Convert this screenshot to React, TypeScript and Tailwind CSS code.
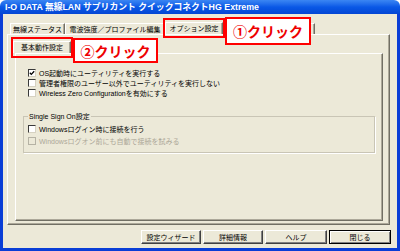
import React from 'react'

// XP-style dialog: オプション設定 tab of the I-O DATA supplicant, with red callouts

const Check = ({ checked, disabled }: { checked?: boolean; disabled?: boolean }) => (
  <span
    className={
      disabled
        ? 'w-[8px] h-[8px] shrink-0 border border-[#b5b2a4] bg-[#ece9d8]'
        : 'w-[8px] h-[8px] shrink-0 border border-[#3a3a3a] border-r-[#d6d2c2] border-b-[#d6d2c2] bg-white flex items-center justify-center'
    }
  >
    {checked && (
      <svg width="6" height="6" viewBox="0 0 6 6">
        <polyline points="0.8,2.8 2.3,4.4 5.2,1.2" fill="none" stroke="#000" strokeWidth="1.3" />
      </svg>
    )}
  </span>
)

const Row = ({ label, checked, disabled }: { label: string; checked?: boolean; disabled?: boolean }) => (
  <div className="flex items-center h-[10px] gap-[3px]">
    <Check checked={checked} disabled={disabled} />
    <span className={disabled ? 'text-[7px] leading-none text-[#aca899]' : 'text-[7px] leading-none text-black'}>
      {label}
    </span>
  </div>
)

const Tab = ({ label, width, active }: { label?: string; width: string; active?: boolean }) => (
  <div
    className={`${width} ${
      active ? 'h-[12px]' : 'h-[11px]'
    } flex items-center justify-center whitespace-nowrap border border-b-0 border-t-white border-l-white border-r-[#716f64] shadow-[inset_-1px_0_0_#aca899] text-[7px] leading-none text-black bg-[#ece9d8]`}
  >
    {label}
  </div>
)

const Button = ({ label, width, def }: { label: string; width: string; def?: boolean }) => (
  <button
    className={`${width} h-[14px] flex items-center justify-center text-[7px] leading-none text-black bg-[#ece9d8] ${
      def
        ? 'border border-black shadow-[inset_1px_1px_0_#fff,inset_-1px_-1px_0_#808080]'
        : 'border border-t-white border-l-white border-r-[#404040] border-b-[#404040] shadow-[inset_-1px_-1px_0_#808080]'
    }`}
  >
    {label}
  </button>
)

export default function App() {
  return (
    <div className="relative w-[400px] h-[251px] flex flex-col overflow-hidden bg-white font-['Liberation_Sans','Noto_Sans_CJK_JP',sans-serif]">
      {/* Title bar */}
      <div className="h-[14px] shrink-0 flex items-center pl-[5px] rounded-t-[6px] bg-linear-to-b from-[#3b86f3] via-[#0a58e6] to-[#0446d4] text-white text-[8.8px] font-bold leading-none whitespace-nowrap">
        I-O DATA 無線LAN サプリカント クイックコネクトHG Extreme
      </div>

      {/* Client area */}
      <div className="flex-1 flex flex-col bg-[#ece9d8] border-x-[3px] border-b-[3px] border-[#0a3ed6]">
        {/* Outer tabs */}
        <div className="flex items-end h-[12px] mt-[8px] ml-[7px]">
          <Tab label="無線ステータス" width="w-[55px]" />
          <Tab label="電波強度／プロファイル編集" width="w-[100px]" />
          <Tab label="オプション設定" width="w-[58px]" active />
          <Tab width="w-[92px]" />
        </div>

        {/* Outer panel */}
        <div className="ml-[4px] w-[383px] h-[191px] flex flex-col border border-t-white border-l-white border-r-[#716f64] border-b-[#716f64] shadow-[inset_-1px_-1px_0_#aca899]">
          {/* Inner tabs */}
          <div className="flex items-end h-[13px] mt-[5px] ml-[5px]">
            <Tab label="基本動作設定" width="w-[58px]" active />
            <Tab width="w-[40px]" />
          </div>

          {/* Inner panel */}
          <div className="ml-[7px] w-[368px] h-[168px] flex flex-col pt-[14px] pl-[12px] border border-t-white border-l-white border-r-[#716f64] border-b-[#716f64] shadow-[inset_-1px_-1px_0_#aca899]">
            <Row label="OS起動時にユーティリティを実行する" checked />
            <Row label="管理者権限のユーザー以外でユーティリティを実行しない" />
            <Row label="Wireless Zero Configurationを有効にする" />

            <fieldset className="mt-[14px] -ml-[5px] w-[352px] h-[41px] pl-[4px] pt-[3px] border border-[#c9c5b5] shadow-[1px_1px_0_#fff] flex flex-col gap-[2px]">
              <legend className="px-[1px] text-[7px] leading-[9px] text-black">Single Sign On設定</legend>
              <Row label="Windowsログイン時に接続を行う" />
              <Row label="Windowsログオン前にも自動で接続を試みる" disabled />
            </fieldset>
          </div>
        </div>

        {/* Buttons */}
        <div className="flex justify-end gap-[2px] pr-[6px] mt-[5px]">
          <Button label="設定ウィザード" width="w-[60px]" />
          <Button label="詳細情報" width="w-[60px]" />
          <Button label="ヘルプ" width="w-[62px]" />
          <Button label="閉じる" width="w-[62px]" def />
        </div>
      </div>

      {/* Callouts */}
      <div className="absolute left-[163px] top-[18px] w-[62px] h-[20px] border-2 border-[#ff0000]" />
      <div className="absolute left-[225px] top-[17px] w-[86px] h-[28px] border-2 border-[#ff0000] bg-white flex items-center justify-center text-[14px] font-bold leading-none text-[#ee0000] font-['Noto_Sans_CJK_JP',sans-serif]">
        ①クリック
      </div>
      <div className="absolute left-[11px] top-[37px] w-[62px] h-[21px] border-2 border-[#ff0000]" />
      <div className="absolute left-[73px] top-[38px] w-[85px] h-[25px] border-2 border-[#ff0000] bg-white flex items-center justify-center text-[14px] font-bold leading-none text-[#ee0000] font-['Noto_Sans_CJK_JP',sans-serif]">
        ②クリック
      </div>
    </div>
  )
}
